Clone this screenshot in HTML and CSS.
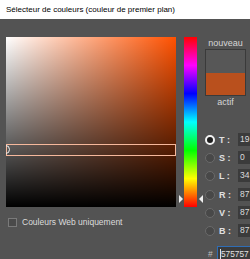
FILE: index.html
```html
<!DOCTYPE html>
<html>
<head>
  <title>Sélecteur de couleurs</title>
  <link rel="stylesheet" href="styles.css">
</head>
<body>
  <div class="titlebar">Sélecteur de couleurs (couleur de premier plan)</div>

  <div class="panel">
    <div class="left">
      <div class="field">
        <div class="band"></div>
        <div class="marker"></div>
      </div>
      <label class="webonly">
        <span class="check"></span>
        Couleurs Web uniquement
      </label>
    </div>

    <div class="hue">
      <div class="strip"></div>
      <span class="arrow arrow-l"></span>
      <span class="arrow arrow-r"></span>
    </div>

    <div class="right">
      <div class="preview">
        <div class="caption">nouveau</div>
        <div class="swatch">
          <div class="swatch-new"></div>
          <div class="swatch-old"></div>
        </div>
        <div class="caption">actif</div>
      </div>

      <div class="fields">
        <div class="group">
          <div class="row"><span class="radio on"></span><span class="key">T :</span><span class="box">19</span></div>
          <div class="row"><span class="radio"></span><span class="key">S :</span><span class="box">0</span></div>
          <div class="row"><span class="radio"></span><span class="key">L :</span><span class="box">34</span></div>
        </div>
        <div class="group">
          <div class="row"><span class="radio"></span><span class="key">R :</span><span class="box">87</span></div>
          <div class="row"><span class="radio"></span><span class="key">V :</span><span class="box">87</span></div>
          <div class="row"><span class="radio"></span><span class="key">B :</span><span class="box">87</span></div>
        </div>
        <div class="hexrow">
          <span class="hash">#</span>
          <span class="hexbox"><span class="caret"></span>575757</span>
        </div>
      </div>
    </div>
  </div>
</body>
</html>
```

FILE: styles.css
```css
body {
  margin: 0;
  width: 250px;
  height: 259px;
  overflow: hidden;
  background-color: #535353;
  font-family: "Liberation Sans", Arial, sans-serif;
}

.titlebar {
  height: 19px;
  line-height: 19px;
  padding-left: 6px;
  background-color: #ffffff;
  color: #000000;
  font-size: 8px;
}

.panel {
  display: flex;
  padding-top: 18px;
  padding-left: 6px;
}

.panel > div {
  flex-shrink: 0;
}

.left {
  display: flex;
  flex-direction: column;
}

.field {
  position: relative;
  width: 170px;
  height: 170px;
  overflow: hidden;
  background: linear-gradient(to bottom, rgba(0, 0, 0, 0), #000000),
    linear-gradient(to right, #ffffff, #ff5100);
}

.band {
  position: absolute;
  left: 0;
  top: 107px;
  width: 168px;
  height: 10px;
  border: 1px solid #f6b89c;
}

.marker {
  position: absolute;
  left: -5px;
  top: 108px;
  width: 7px;
  height: 7px;
  border: 1.5px solid #f2f2f2;
  border-radius: 50%;
}

.webonly {
  display: flex;
  align-items: center;
  gap: 5px;
  margin-top: 10px;
  padding-left: 2px;
  color: #dcdcdc;
  font-size: 8.5px;
}

.check {
  width: 7px;
  height: 7px;
  border: 1px solid #7a7a7a;
  background-color: #4a4a4a;
}

.hue {
  position: relative;
  margin-left: 8px;
  width: 13px;
  height: 170px;
}

.strip {
  height: 100%;
  background: linear-gradient(to bottom, #ff0000, #ff00ff 16.7%, #0000ff 33.3%, #00ffff 50%, #00ff00 66.7%, #ffff00 83.3%, #ff0000);
}

.arrow {
  position: absolute;
  top: 158px;
  width: 0;
  height: 0;
  border-top: 4px solid transparent;
  border-bottom: 4px solid transparent;
}

.arrow-l {
  left: -5px;
  border-left: 4px solid #f0f0f0;
}

.arrow-r {
  right: -6px;
  border-right: 4px solid #f0f0f0;
}

.right {
  display: flex;
  flex-direction: column;
  margin-left: 8px;
}

.preview {
  display: flex;
  flex-direction: column;
  align-items: center;
  width: 41px;
}

.caption {
  color: #d6d6d6;
  font-size: 9px;
  line-height: 12px;
}

.swatch {
  width: 39px;
  height: 45px;
  border: 1px solid #3a3a3a;
}

.swatch-new {
  height: 23px;
  background-color: #575757;
}

.swatch-old {
  height: 22px;
  background-color: #b9501d;
}

.fields {
  display: flex;
  flex-direction: column;
  gap: 6px;
  margin-top: 25px;
}

.group {
  display: flex;
  flex-direction: column;
  gap: 5px;
}

.row {
  display: flex;
  align-items: center;
  height: 13px;
  color: #e0e0e0;
  font-size: 9px;
  font-weight: bold;
}

.radio {
  width: 8px;
  height: 8px;
  border: 1px solid #6a6a6a;
  border-radius: 50%;
  background-color: #484848;
}

.radio.on {
  width: 6px;
  height: 6px;
  border: 2px solid #f2f2f2;
  background-color: #1e1e1e;
}

.key {
  width: 19px;
  margin-left: 4px;
  white-space: pre;
}

.box {
  width: 11px;
  height: 13px;
  line-height: 13px;
  padding-left: 2px;
  overflow: hidden;
  background-color: #3b3b3b;
  color: #dcdcdc;
  font-size: 8.5px;
  font-weight: normal;
}

.hexrow {
  display: flex;
  align-items: center;
  margin-top: 3px;
  color: #bdbdbd;
  font-size: 8.3px;
}

.hash {
  width: 9px;
  padding-left: 3px;
}

.hexbox {
  display: flex;
  align-items: center;
  width: 30px;
  height: 13px;
  padding-left: 2px;
  overflow: hidden;
  border: 1px solid #2f6db5;
  border-right: none;
  background-color: #3b3b3b;
  color: #e0e0e0;
}

.caret {
  width: 1px;
  height: 10px;
  background-color: #e0e0e0;
}
```
